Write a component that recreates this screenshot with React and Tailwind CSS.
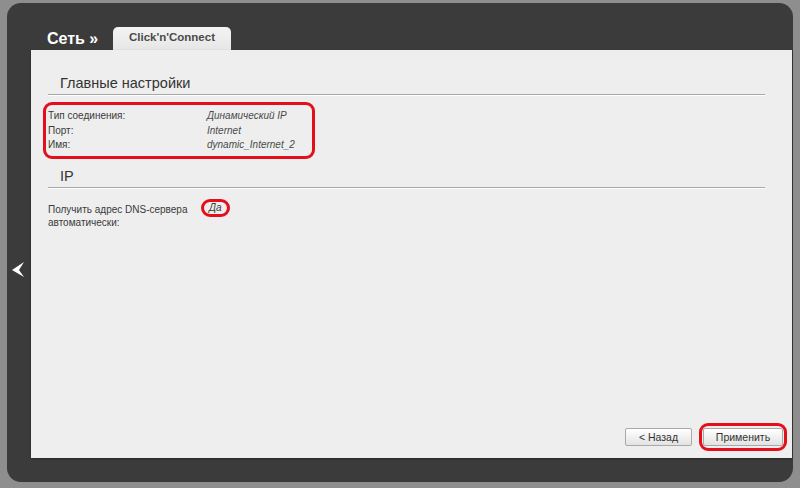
import React from "react";

const font = { fontFamily: '"Liberation Sans", Arial, sans-serif' };

function Row({ label, value }) {
  return (
    <div className="flex h-[14.5px] items-center text-[10px] leading-[14px]">
      <div className="w-[159px] text-[#3a3a3a]">{label}</div>
      <div className="italic text-[#4a4a4a]">{value}</div>
    </div>
  );
}

function Heading({ children }) {
  return (
    <div className="mr-[27px]">
      <div className="pl-[12px] pb-[2px] text-[14.5px] leading-[18px] text-[#333]">{children}</div>
      <div className="h-px bg-[#a8a8a8]" />
      <div className="h-px bg-white" />
    </div>
  );
}

export default function App() {
  return (
    <div
      className="w-[800px] h-[488px] bg-[#8e8e8e] pt-[3px] px-[7px] pb-[6px]"
      style={font}
    >
      <div className="h-[479px] rounded-[14px] bg-[#3b3b3b] flex flex-col">
        <div className="h-[47px] flex items-end pl-[40px] shrink-0">
          <div className="w-[66px] mb-[2px] text-white font-bold text-[16px] leading-[18px]">
            Сеть »
          </div>
          <div className="w-[118px] h-[23px] rounded-t-[5px] bg-gradient-to-b from-[#f4f4f4] to-[#e6e6e6] flex justify-center pt-[3px]">
            <span className="text-[11.5px] leading-[14px] font-bold text-[#4a4a4a]">
              Click'n'Connect
            </span>
          </div>
        </div>
        <div className="h-[408px] flex shrink-0">
          <div className="w-[24px] pt-[212px] pl-[5px] shrink-0">
            <svg width="13" height="16" viewBox="0 0 13 16">
              <polygon points="0,8 12,0 7,8 12,15" fill="#ffffff" />
            </svg>
          </div>
          <div className="flex-1 mr-[1px] bg-[#eeeeee] flex flex-col pl-[17px] pt-[24px] shadow-[0_1px_2px_rgba(0,0,0,0.4)]">
            <Heading>Главные настройки</Heading>
            <div className="mt-[6px] ml-[-5px] w-[272px] h-[57px] border-[3px] border-[#e3101c] rounded-[9px] pl-[2px] pt-[4px]">
              <Row label="Тип соединения:" value="Динамический IP" />
              <Row label="Порт:" value="Internet" />
              <Row label="Имя:" value="dynamic_Internet_2" />
            </div>
            <div className="mt-[8px]">
              <Heading>IP</Heading>
            </div>
            <div className="mt-[14px] flex text-[10px] leading-[13px]">
              <div className="w-[159px] text-[#3a3a3a]">
                Получить адрес DNS-сервера
                <br />
                автоматически:
              </div>
              <div className="ml-[-6px] mt-[-4px]">
                <span className="inline-block h-[18px] px-[5px] border-[3px] border-[#e3101c] rounded-full italic text-[#3a3a3a] leading-[12px]">
                  Да
                </span>
              </div>
            </div>
            <div className="flex-1" />
            <div className="flex justify-end items-center pr-[5px] pb-[7px]">
              <button className="w-[67px] h-[18px] border border-[#a9a9a9] rounded-[2px] bg-gradient-to-b from-white to-[#e3e3e3] text-[10.5px] leading-[16px] text-[#333]">
                &lt; Назад
              </button>
              <div className="ml-[7px] border-[3px] border-[#e3101c] rounded-[9px] px-[1px] pt-[2px] pb-[2px]">
                <button className="block w-[80px] h-[18px] border border-[#a9a9a9] rounded-[2px] bg-gradient-to-b from-white to-[#e3e3e3] text-[10.5px] leading-[16px] text-[#333]">
                  Применить
                </button>
              </div>
            </div>
          </div>
        </div>
        <div className="h-[24px]" />
      </div>
    </div>
  );
}
